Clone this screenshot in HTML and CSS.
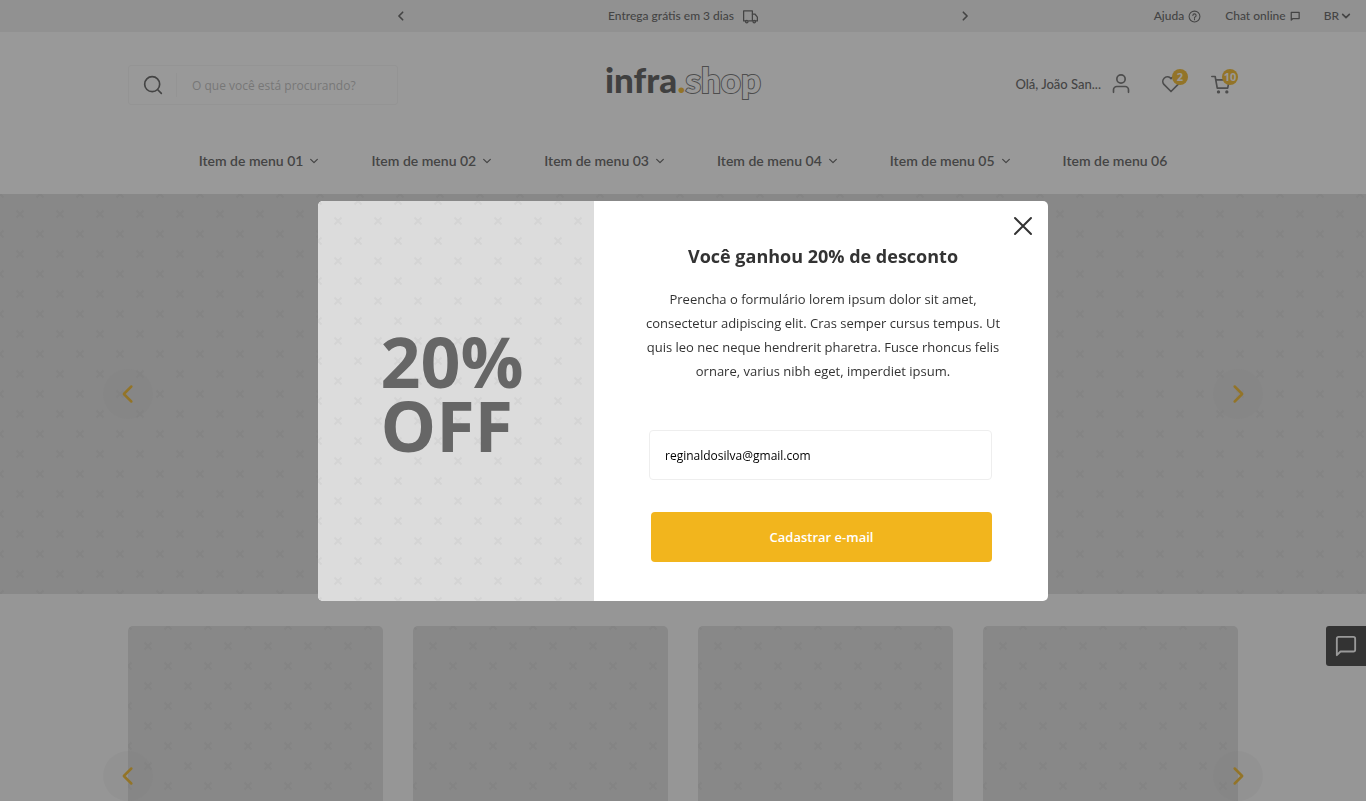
FILE: index.html
```html
<!DOCTYPE html>
<html lang="pt-BR">
<head>
<meta charset="utf-8">
<title>infra.shop</title>
<meta name="viewport" content="width=device-width, initial-scale=1">
<link rel="stylesheet" href="styles.css">
</head>
<body>
<svg class="sprite" aria-hidden="true">
  <symbol id="left" viewBox="0 0 24 24"><path d="M16 3 7 12l9 9"/></symbol>
  <symbol id="right" viewBox="0 0 24 24"><path d="m8 3 9 9-9 9"/></symbol>
  <symbol id="down" viewBox="0 0 24 24"><path d="m4 8 8 8 8-8"/></symbol>
  <symbol id="chat" viewBox="0 0 24 24"><path d="M2 22V4a2 2 0 0 1 2-2h16a2 2 0 0 1 2 2v12a2 2 0 0 1-2 2H6z"/></symbol>
</svg>

<div class="topbar">
  <div class="announce">
    <button class="plain" aria-label="Anterior"><svg class="icon xs heavy"><use href="#left"/></svg></button>
    <span class="announce-text">Entrega grátis em 3 dias
      <svg class="icon truck" viewBox="0 0 24 24"><path d="M5 19H1V3h14v16H9"/><path d="M15 8h4l4 5v6h-4"/><circle cx="6" cy="20" r="2"/><circle cx="18" cy="20" r="2"/></svg>
    </span>
    <button class="plain" aria-label="Próximo"><svg class="icon xs heavy"><use href="#right"/></svg></button>
  </div>
  <div class="toplinks">
    <a href="#">Ajuda <svg class="icon sm" viewBox="0 0 24 24"><circle cx="12" cy="12" r="10"/><path d="M9 10a3 3 0 1 1 4 3q-1 .4-1 2M12 17v1"/></svg></a>
    <a href="#">Chat online <svg class="icon mini" viewBox="0 0 24 24"><path d="M3 22V3h19v15H7z"/></svg></a>
    <button class="plain lang">BR <svg class="icon xs heavy"><use href="#down"/></svg></button>
  </div>
</div>

<header class="header">
  <div class="container head-row">
    <form class="search">
      <button type="button" class="plain search-btn" aria-label="Buscar"><svg class="icon search-icon" viewBox="0 0 24 24"><circle cx="11" cy="11" r="9"/><path d="m18 18 4 4"/></svg></button>
      <input type="search" aria-label="Buscar produtos" placeholder="O que você está procurando?">
    </form>
    <a class="logo" href="#"><span>infra</span><span class="dot">.</span><span class="outline">shop</span></a>
    <div class="account">
      <a class="user" href="#">Olá, João San... <svg class="icon md" viewBox="0 0 24 24"><circle cx="12" cy="6" r="5"/><path d="M3 22v-3a4 4 0 0 1 4-4h10a4 4 0 0 1 4 4v3"/></svg></a>
      <a class="tool" href="#" aria-label="Favoritos"><svg class="icon md" viewBox="0 0 24 24"><path d="M12 21 3.500 12.500a5.500 5.500 0 0 1 7.700-7.800l.8.8.8-.8a5.500 5.500 0 0 1 7.700 7.800z"/></svg><span class="badge">2</span></a>
      <a class="tool" href="#" aria-label="Carrinho"><svg class="icon md" viewBox="0 0 24 24"><path d="M1 3h4l2.500 14H20l2-10H6"/><circle cx="9" cy="21.500" r="1"/><circle cx="19" cy="21.500" r="1"/></svg><span class="badge">10</span></a>
    </div>
  </div>
  <nav class="menu">
    <a href="#">Item de menu 01 <svg class="icon xs"><use href="#down"/></svg></a>
    <a href="#">Item de menu 02 <svg class="icon xs"><use href="#down"/></svg></a>
    <a href="#">Item de menu 03 <svg class="icon xs"><use href="#down"/></svg></a>
    <a href="#">Item de menu 04 <svg class="icon xs"><use href="#down"/></svg></a>
    <a href="#">Item de menu 05 <svg class="icon xs"><use href="#down"/></svg></a>
    <a href="#">Item de menu 06</a>
  </nav>
</header>

<main>
  <section class="hero pattern">
    <div class="container hero-inner">
      <button class="arrow prev" aria-label="Banner anterior"><svg class="icon"><use href="#left"/></svg></button>
      <button class="arrow next" aria-label="Próximo banner"><svg class="icon"><use href="#right"/></svg></button>
    </div>
  </section>
  <section class="container cards">
    <div class="card pattern"></div>
    <div class="card pattern"></div>
    <div class="card pattern"></div>
    <div class="card pattern"></div>
    <button class="arrow prev" aria-label="Anteriores"><svg class="icon"><use href="#left"/></svg></button>
    <button class="arrow next" aria-label="Próximos"><svg class="icon"><use href="#right"/></svg></button>
  </section>
</main>
<button class="chat" aria-label="Abrir chat"><svg class="icon"><use href="#chat"/></svg></button>

<div class="overlay">
  <div class="modal" role="dialog" aria-modal="true" aria-labelledby="title">
    <div class="promo pattern"><strong>20%<br>OFF</strong></div>
    <div class="panel">
      <button class="plain close" aria-label="Fechar"><svg class="icon" viewBox="0 0 24 24"><path d="m4 4 16 16M20 4 4 20"/></svg></button>
      <h2 id="title">Você ganhou 20% de desconto</h2>
      <p>Preencha o formulário lorem ipsum dolor sit amet, consectetur adipiscing elit. Cras semper cursus tempus. Ut quis leo nec neque hendrerit pharetra. Fusce rhoncus felis ornare, varius nibh eget, imperdiet ipsum.</p>
      <form class="signup">
        <input type="email" aria-label="E-mail" value="reginaldosilva@gmail.com">
        <button type="button">Cadastrar e-mail</button>
      </form>
    </div>
  </div>
</div>
</body>
</html>
```
FILE: styles.css
```css
* { box-sizing: border-box; }

body {
  margin: 0;
  height: 100vh;
  overflow: hidden;
  background: #f9f9f9;
  color: #333;
  font-family: "Open Sans", sans-serif;
}

a { color: inherit; text-decoration: none; }
button, input { font: inherit; color: inherit; }
button { cursor: pointer; }

.sprite { position: absolute; width: 0; height: 0; }

.icon {
  display: block;
  flex: none;
  width: 24px;
  height: 24px;
  fill: none;
  stroke: currentColor;
  stroke-width: 2;
  stroke-linecap: round;
  stroke-linejoin: round;
}
.icon.xs { width: 10px; height: 10px; stroke-width: 3; }
.icon.heavy { stroke-width: 4; }
.icon.mini { width: 10px; height: 10px; stroke-width: 3; }
.icon.sm { width: 13px; height: 13px; }
.icon.md { width: 20px; height: 20px; color: #666; }

.plain { padding: 0; border: 0; background: none; }

.container { width: 100%; max-width: 1110px; margin: 0 auto; }

.pattern {
  background: #dcdcdc url("data:image/svg+xml,%3Csvg xmlns='http://www.w3.org/2000/svg' width='40' height='40'%3E%3Cpath d='M16.500 16.500l7 7m0-7l-7 7M-3.500-3.500l7 7m0-7l-7 7M36.500-3.500l7 7m0-7l-7 7M-3.500 36.500l7 7m0-7l-7 7M36.500 36.500l7 7m0-7l-7 7' stroke='%23d4d4d4' stroke-width='2' fill='none'/%3E%3C/svg%3E");
}

.topbar {
  display: grid;
  grid-template-columns: 1fr 574px 1fr;
  align-items: center;
  height: 32px;
  background: #efefef;
  color: #555;
  font: 500 12px/16px Lato, sans-serif;
}
.announce { grid-column: 2; display: flex; align-items: center; justify-content: space-between; }
.announce-text { display: flex; align-items: center; gap: 9px; }
.truck { width: 15px; height: 15px; }
.toplinks { display: flex; justify-content: flex-end; gap: 24px; padding-right: 15px; }
.toplinks > * { display: flex; align-items: center; gap: 4px; }
.toplinks .lang { gap: 2px; }

.header { height: 162px; padding-top: 33px; background: #fff; color: #555; }
.head-row { display: grid; grid-template-columns: 1fr auto 1fr; align-items: center; }

.search {
  display: flex;
  align-items: center;
  width: 270px;
  height: 40px;
  border: 1px solid #f4f4f4;
  border-radius: 3px;
}
.search-btn { display: grid; place-items: center; width: 48px; height: 24px; border-right: 1px solid #f4f4f4; }
.search-icon { width: 20px; height: 20px; }
.search input { flex: 1; min-width: 0; padding: 0 15px; border: 0; background: none; font-size: 12px; outline: 0; }
.search input::placeholder { color: #bbb; opacity: 1; }

.logo { display: flex; padding-bottom: 12px; color: #4d4d4d; font: 900 35px/28px Lato, sans-serif; }
.logo .dot { color: #f2b51d; }
.logo .outline { color: #fff; -webkit-text-stroke: 2px #666; paint-order: stroke fill; }

.account { display: flex; align-items: center; justify-content: flex-end; gap: 30px; padding: 0 7px 2px 0; }
.user { display: flex; align-items: center; gap: 10px; font: 500 13px/16px Lato, sans-serif; }
.tool { position: relative; }
.badge {
  position: absolute;
  top: -5px;
  right: -7px;
  width: 16px;
  border-radius: 8px;
  background: #f2b51d;
  color: #fff;
  font: 700 11px/16px "Open Sans", sans-serif;
  text-align: center;
}

.menu { display: flex; justify-content: center; gap: 52px; margin-top: 46px; font: 600 14px/20px Lato, sans-serif; }
.menu a { display: flex; align-items: center; gap: 6px; }

.hero { height: 400px; }
.hero-inner { position: relative; height: 100%; }
.cards { position: relative; display: grid; grid-template-columns: repeat(4, 1fr); gap: 30px; margin-top: 32px; }
.card { height: 300px; border-radius: 5px; }

.arrow {
  position: absolute;
  top: 50%;
  display: grid;
  place-items: center;
  width: 50px;
  height: 50px;
  padding: 0;
  border: 0;
  border-radius: 50%;
  background: rgba(200, 200, 200, 0.16);
  color: #f2b51d;
  transform: translateY(-50%);
}
.arrow .icon { width: 20px; height: 20px; stroke-width: 3; }
.arrow.prev { left: -25px; }
.arrow.next { right: -25px; }

.chat {
  position: fixed;
  right: 0;
  top: 626px;
  display: grid;
  place-items: center;
  width: 40px;
  height: 40px;
  padding: 0;
  border: 0;
  border-radius: 3px 0 0 3px;
  background: #333;
  color: #fff;
}
.chat .icon { width: 22px; height: 22px; }

.overlay {
  position: fixed;
  inset: 0;
  display: flex;
  align-items: center;
  justify-content: center;
  background: rgba(51, 51, 51, 0.5);
}
.modal {
  display: grid;
  grid-template-columns: 276px 1fr;
  width: 730px;
  max-width: 100%;
  overflow: hidden;
  border-radius: 5px;
  background: #fff;
}
.promo { display: grid; place-content: center; padding: 0 8px 16px 0; }
.promo strong { color: #666; font-size: 70px; line-height: 64px; }

.panel { position: relative; padding: 43px 46px 39px 50px; text-align: center; }
.close { position: absolute; top: 13px; right: 13px; }
.panel h2 { margin: 0 0 19px; font-size: 18px; line-height: 24px; }
.panel p { margin: 0; font-size: 13px; line-height: 24px; }
.signup { display: grid; gap: 32px; margin: 47px 10px 0 5px; }
.signup input {
  width: 100%;
  height: 50px;
  padding: 1px 15px 0;
  border: 1px solid #eee;
  border-radius: 4px;
  color: #000;
  font-size: 12px;
}
.signup button {
  height: 50px;
  margin-left: 2px;
  border: 0;
  border-radius: 4px;
  background: #f2b51d;
  color: #fff;
  font-size: 13px;
  font-weight: 600;
}
```
